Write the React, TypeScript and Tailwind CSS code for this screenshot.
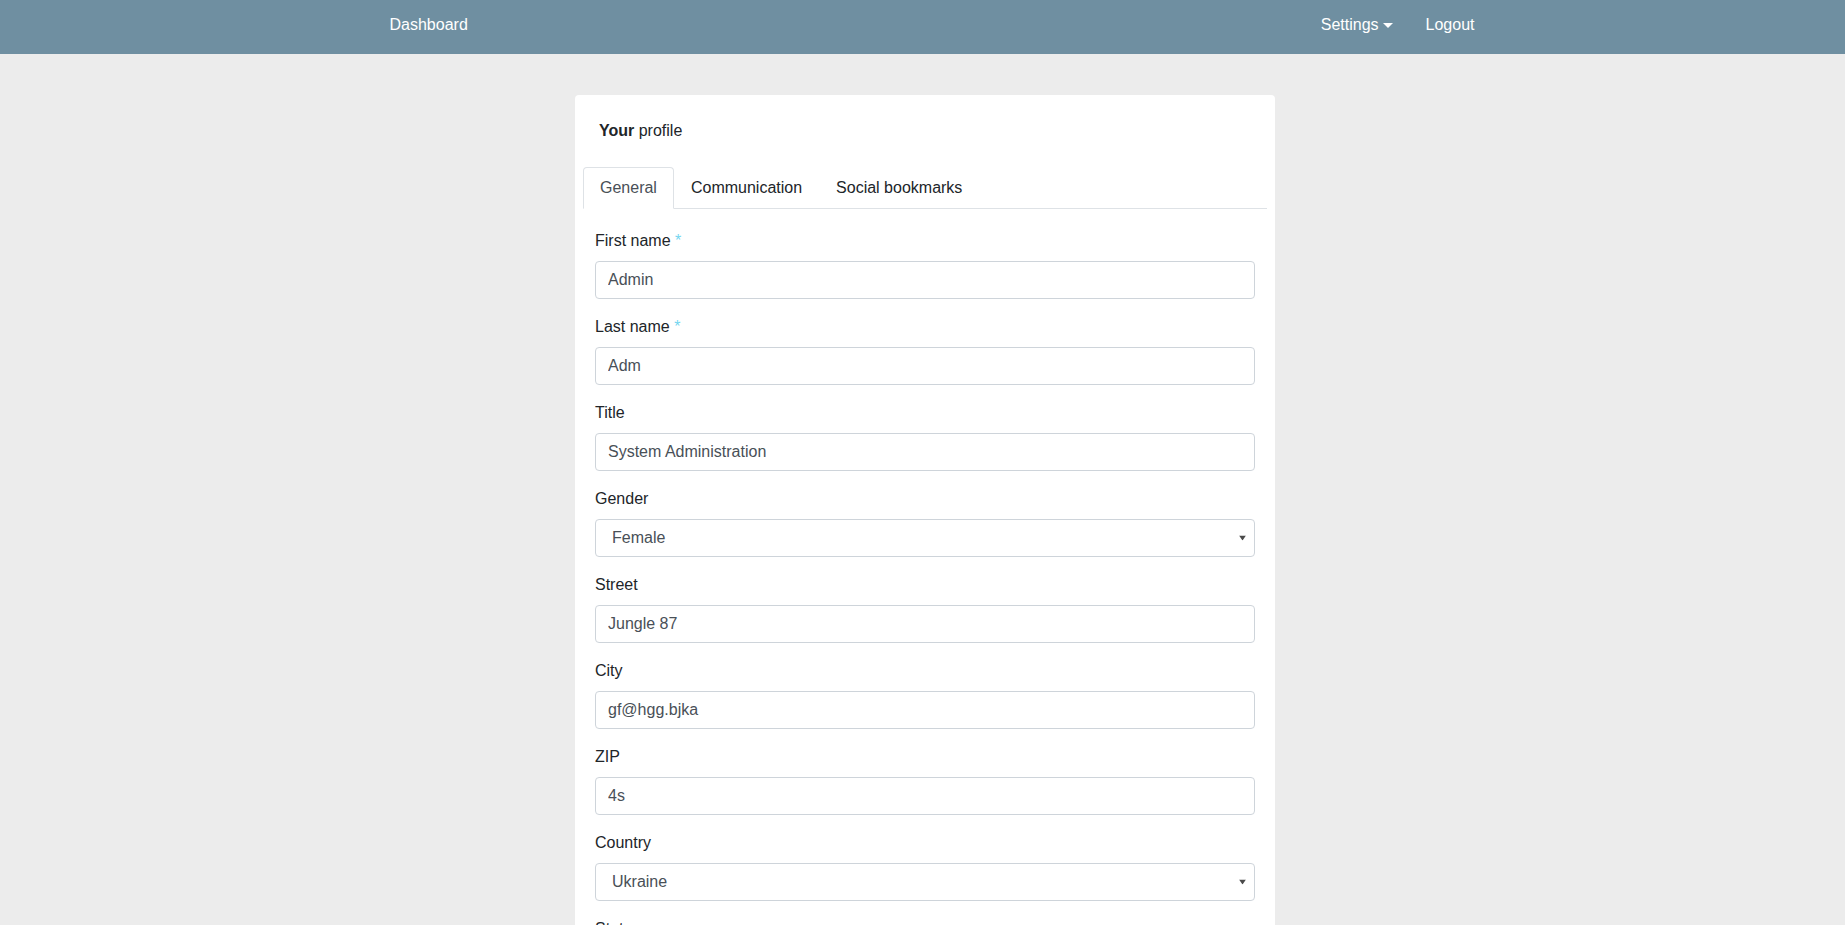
import React from 'react';

type Field = {
  label: string;
  value: string;
  required?: boolean;
  select?: boolean;
};

const fields: Field[] = [
  { label: 'First name', value: 'Admin', required: true },
  { label: 'Last name', value: 'Adm', required: true },
  { label: 'Title', value: 'System Administration' },
  { label: 'Gender', value: 'Female', select: true },
  { label: 'Street', value: 'Jungle 87' },
  { label: 'City', value: 'gf@hgg.bjka' },
  { label: 'ZIP', value: '4s' },
  { label: 'Country', value: 'Ukraine', select: true },
  { label: 'State', value: 'Kyiv', select: true },
  { label: 'Phone', value: '' },
];

const FormRow: React.FC<{ field: Field }> = ({ field }) => (
  <div className="mb-4">
    <label className="block mb-2 leading-6 text-[#212529]">
      {field.label}
      {field.required && <span className="text-[#74d6f0]"> *</span>}
    </label>
    {field.select ? (
      <div className="relative">
        <select
          defaultValue={field.value}
          className="w-full h-[38px] appearance-none rounded border border-[#ced4da] bg-white pl-4 pr-8 text-[#495057] outline-none"
        >
          <option>{field.value}</option>
        </select>
        <svg
          className="pointer-events-none absolute right-[9px] top-1/2 -translate-y-1/2"
          width="7"
          height="5"
          viewBox="0 0 7 5"
        >
          <path d="M0 0h7L3.5 5z" fill="#4a4a4a" />
        </svg>
      </div>
    ) : (
      <input
        defaultValue={field.value}
        className="w-full h-[38px] rounded border border-[#ced4da] bg-white px-3 text-[#495057] outline-none"
      />
    )}
  </div>
);

export default function App() {
  return (
    <div className="min-h-screen bg-[#ececec] text-base font-['Liberation_Sans',Arial,sans-serif]">
      <nav className="h-[54px] bg-[#6f8fa1] text-white">
        <div className="w-[1110px] mx-auto h-full flex items-center justify-between pl-[22px] pr-[3px] pb-[4px]">
          <span>Dashboard</span>
          <div className="flex items-center gap-[33px]">
            <span className="flex items-center gap-[4px]">
              Settings
              <svg width="10" height="5" viewBox="0 0 10 5">
                <path d="M0 0h10L5 5z" fill="white" />
              </svg>
            </span>
            <span>Logout</span>
          </div>
        </div>
      </nav>

      <div className="flex justify-center pt-[41px] pl-[5px]">
        <div className="w-[700px] bg-white rounded">
          <div className="px-6 pt-6 pb-6 leading-6 text-[#212529]">
            <span className="font-bold">Your</span> profile
          </div>
          <div className="mx-2 flex border-b border-[#dee2e6] leading-6">
            <div className="-mb-px px-4 py-2 border border-[#dee2e6] border-b-white rounded-t bg-white text-[#495057]">
              General
            </div>
            <div className="-mb-px px-4 py-2 border border-transparent text-[#212529]">
              Communication
            </div>
            <div className="-mb-px px-4 py-2 border border-transparent text-[#212529]">
              Social bookmarks
            </div>
          </div>
          <div className="px-5 pt-5 pb-4">
            {fields.map((f) => (
              <FormRow key={f.label} field={f} />
            ))}
          </div>
        </div>
      </div>
    </div>
  );
}
